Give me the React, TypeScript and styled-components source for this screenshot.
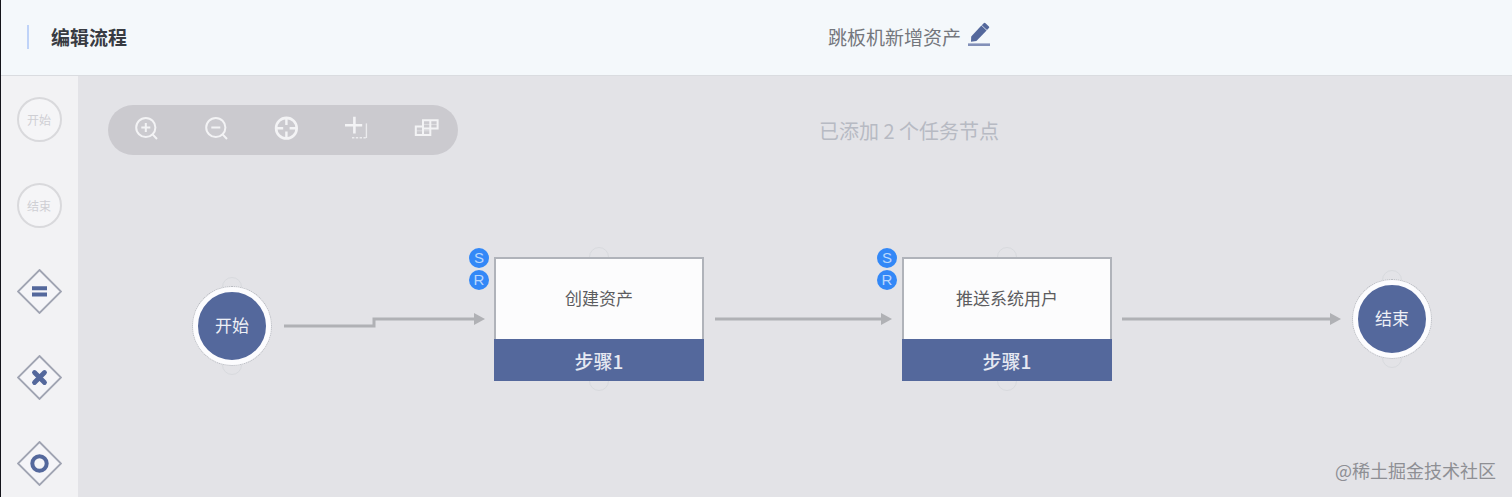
import React from "react";
import styled, { createGlobalStyle } from "styled-components";

const color = {
  navy: "#54689c",
  header: "#f4f8fb",
  side: "#f2f2f4",
  canvas: "#e3e3e7",
  edge: "#b0b1b5",
  badge: "#3388f7",
};

const GlobalStyle = createGlobalStyle`
  *, *::before, *::after { box-sizing: border-box; }
  body {
    margin: 0;
    background: ${color.canvas};
    font-family: "Noto Sans CJK SC", "Noto Sans", sans-serif;
  }
  button {
    margin: 0;
    padding: 0;
    border: 0;
    background: none;
    font: inherit;
    color: inherit;
    cursor: pointer;
  }
  svg { display: block; }
`;

const Page = styled.div`
  display: flex;
  flex-direction: column;
  min-height: 100vh;
  border-left: 1px solid #14141a;
`;

const Header = styled.header`
  display: grid;
  grid-template-columns: 305px 1fr;
  align-items: center;
  height: 76px;
  padding-bottom: 2px;
  background: ${color.header};
  border-bottom: 1px solid #dadce0;
`;

const PageTitle = styled.h1`
  display: flex;
  align-items: center;
  gap: 22px;
  margin: 0;
  padding-left: 26px;
  font-size: 19px;
  line-height: 24px;
  font-weight: 700;
  color: #383b42;

  &::before {
    content: "";
    width: 2px;
    height: 24px;
    background: #bfd3f8;
  }
`;

const FlowName = styled.div`
  display: flex;
  align-items: center;
  justify-content: center;
  gap: 7px;
  font-size: 19px;
  line-height: 24px;
  color: #74777d;
`;

const EditButton = styled.button`
  width: 22px;
  height: 30px;
`;

const Workspace = styled.div`
  display: flex;
  flex: 1;
`;

const Palette = styled.aside`
  display: flex;
  flex-direction: column;
  align-items: center;
  gap: 41px;
  flex: none;
  width: 77px;
  padding: 21px 1px 10px 0;
  background: ${color.side};
`;

const PaletteRound = styled.button`
  width: 45px;
  height: 45px;
  border: 2px solid #d9d9dc;
  border-radius: 50%;
  background: #f5f5f7;
  font-size: 12px;
  color: #cfcfd4;
`;

const PaletteGate = styled.button`
  width: 45px;
  height: 45px;
`;

const Canvas = styled.main`
  position: relative;
  flex: 1;
  min-width: 0;
  overflow: hidden;
  background: ${color.canvas};
`;

const CanvasBar = styled.div`
  display: grid;
  grid-template-columns: 350px 1fr;
  align-items: center;
  padding: 29px 152px 0 30px;
`;

const Toolbar = styled.div`
  display: flex;
  align-items: center;
  gap: 46px;
  height: 50px;
  padding: 0 20px 4px 26px;
  border-radius: 25px;
  background: #cbcacf;
`;

const ToolButton = styled.button`
  flex: none;
  width: 24px;
  height: 24px;
  color: #f3f3f5;
`;

const Hint = styled.p`
  margin: 0;
  padding-top: 2px;
  text-align: center;
  white-space: nowrap;
  font-size: 20px;
  line-height: 24px;
  color: #b7bac3;
`;

const Edges = styled.svg`
  position: absolute;
  left: 0;
  top: 0;
  pointer-events: none;
`;

const NodeBox = styled.div<{ $x: number; $y: number }>`
  position: absolute;
  left: ${(p) => p.$x}px;
  top: ${(p) => p.$y}px;
  isolation: isolate;

  &::before,
  &::after {
    content: "";
    position: absolute;
    z-index: -1;
    left: 50%;
    width: 20px;
    height: 20px;
    margin-left: -10px;
    border: 1px solid #d8dade;
    border-radius: 50%;
  }
  &::before { top: -10px; }
  &::after { bottom: -10px; }
`;

const RoundNode = styled(NodeBox)`
  border: 1px dotted #b4b7bd;
  border-radius: 50%;
`;

const RoundBody = styled.div`
  display: flex;
  align-items: center;
  justify-content: center;
  width: 78px;
  height: 78px;
  padding-bottom: 2px;
  border: 5px solid #fcfcfe;
  border-radius: 50%;
  background: ${color.navy};
  font-size: 17px;
  line-height: 24px;
  color: #eef0f6;
`;

const TaskName = styled.div`
  display: flex;
  align-items: center;
  justify-content: center;
  width: 210px;
  height: 82px;
  padding-bottom: 2px;
  border: 2px solid #b0b3ba;
  border-bottom: 0;
  background: #fcfcfd;
  font-size: 17px;
  line-height: 24px;
  color: #5c5c60;
`;

const TaskStep = styled.div`
  display: flex;
  align-items: center;
  justify-content: center;
  height: 42px;
  padding-top: 2px;
  background: ${color.navy};
  font-size: 19px;
  line-height: 24px;
  font-weight: 500;
  color: #e6e9f2;
`;

const Badges = styled.div`
  position: absolute;
  left: -25px;
  top: -9px;
  display: flex;
  flex-direction: column;
  gap: 2px;
`;

const Badge = styled.span`
  width: 20px;
  height: 20px;
  border-radius: 50%;
  background: ${color.badge};
  text-align: center;
  font-family: "Liberation Sans", sans-serif;
  font-size: 15px;
  line-height: 20px;
  color: #b9d7fd;
`;

const Watermark = styled.span`
  position: absolute;
  right: 16px;
  bottom: 15px;
  font-size: 18px;
  line-height: 24px;
  color: #8e8f94;
`;

const PencilIcon = () => (
  <svg width="22" height="30" viewBox="0 0 22 30" fill={color.navy} aria-hidden="true">
    <path d="M3 19.8 L3.2 14.4 L13.4 3.6 L18.6 8.4 L8.4 19 Z" />
    <path d="M13.8 3.2 L15.7 1.2 Q16.6 0.4 17.5 1.2 L20.9 4.4 Q21.7 5.2 20.9 6 L19 8 Z" />
    <rect x="0" y="21.4" width="22" height="2.6" fill="#8290b8" />
  </svg>
);

const iconProps = {
  width: 24,
  height: 24,
  viewBox: "0 0 24 24",
  fill: "none",
  stroke: "currentColor",
  strokeWidth: 2,
  "aria-hidden": true,
};

const tools = [
  {
    label: "放大",
    icon: (
      <svg {...iconProps}>
        <circle cx="11.8" cy="11.5" r="9.6" />
        <path d="M18.6 18.4 L23 23 M11.8 7 V16 M7.3 11.5 H16.3" />
      </svg>
    ),
  },
  {
    label: "缩小",
    icon: (
      <svg {...iconProps}>
        <circle cx="11.8" cy="11.5" r="9.6" />
        <path d="M18.6 18.4 L23 23 M7.3 11.5 H16.3" />
      </svg>
    ),
  },
  {
    label: "适应画布",
    icon: (
      <svg {...iconProps}>
        <circle cx="12.4" cy="12.2" r="10.3" strokeWidth="2.6" />
        <path d="M12.4 2 V9 M12.4 15.4 V22.4 M2.2 12.2 H9.2 M15.6 12.2 H22.6" strokeWidth="2.4" />
      </svg>
    ),
  },
  {
    label: "框选",
    icon: (
      <svg {...iconProps}>
        <path d="M10.4 0.8 V17.4 M1 9.2 H18.2" strokeWidth="2.6" />
        <path d="M22.4 7.4 V22" strokeWidth="1.4" opacity=".8" />
        <path d="M8 21.8 H22.8" strokeWidth="1.6" strokeDasharray="2.4 1.4" opacity=".8" />
      </svg>
    ),
  },
  {
    label: "排列节点",
    icon: (
      <svg {...iconProps} overflow="visible">
        <path d="M9 4.2 H23.6 V12.6 H9 Z M16.3 4.2 V12.6" />
        <path d="M9 10.6 H1.8 V19 H16.3 V12.6 M9 10.6 V19" />
        <path d="M9 8.4 H23.6 M1.8 14.8 H16.3" strokeWidth="1" opacity=".5" />
      </svg>
    ),
  },
];

const GateIcon = ({ children }: { children: React.ReactNode }) => (
  <svg width="45" height="45" viewBox="0 0 45 45" fill="none" aria-hidden="true">
    <path d="M22.5 1 L44 22.5 L22.5 44 L1 22.5 Z" fill="#f5f5f8" stroke="#a0a4b2" strokeWidth="1.8" />
    <g stroke={color.navy} strokeWidth="4">
      {children}
    </g>
  </svg>
);

const gates = [
  { label: "并行网关", mark: <path d="M15 19.2 H30 M15 25.6 H30" strokeWidth="4" /> },
  { label: "排他网关", mark: <path d="M17.5 17.5 L27.5 27.5 M27.5 17.5 L17.5 27.5" strokeWidth="4.8" strokeLinecap="round" /> },
  { label: "包容网关", mark: <circle cx="22.5" cy="22.5" r="7.2" /> },
];

const tasks = [
  { x: 416, name: "创建资产", step: "步骤1" },
  { x: 824, name: "推送系统用户", step: "步骤1" },
];

export default function App() {
  return (
    <Page>
      <GlobalStyle />
      <Header>
        <PageTitle>编辑流程</PageTitle>
        <FlowName>
          <span>跳板机新增资产</span>
          <EditButton aria-label="编辑名称">
            <PencilIcon />
          </EditButton>
        </FlowName>
      </Header>
      <Workspace>
        <Palette>
          <PaletteRound>开始</PaletteRound>
          <PaletteRound>结束</PaletteRound>
          {gates.map((g) => (
            <PaletteGate key={g.label} aria-label={g.label}>
              <GateIcon>{g.mark}</GateIcon>
            </PaletteGate>
          ))}
        </Palette>
        <Canvas>
          <Edges width="1434" height="421" fill="none" stroke={color.edge} strokeWidth="3" aria-hidden="true">
            <path d="M206 250 H296 V243 H398" />
            <path d="M637 243 H804" />
            <path d="M1044 243 H1254" />
            <g fill={color.edge} stroke="none">
              <path d="M396 237 L407 243 L396 249 Z" />
              <path d="M803 237 L814 243 L803 249 Z" />
              <path d="M1252 237 L1263 243 L1252 249 Z" />
            </g>
          </Edges>
          <CanvasBar>
            <Toolbar role="toolbar">
              {tools.map((t) => (
                <ToolButton key={t.label} aria-label={t.label}>
                  {t.icon}
                </ToolButton>
              ))}
            </Toolbar>
            <Hint>已添加 2 个任务节点</Hint>
          </CanvasBar>
          <RoundNode $x={114} $y={210}>
            <RoundBody>开始</RoundBody>
          </RoundNode>
          {tasks.map((t) => (
            <NodeBox key={t.name} $x={t.x} $y={181}>
              <TaskName>{t.name}</TaskName>
              <TaskStep>{t.step}</TaskStep>
              <Badges>
                <Badge>S</Badge>
                <Badge>R</Badge>
              </Badges>
            </NodeBox>
          ))}
          <RoundNode $x={1274} $y={203}>
            <RoundBody>结束</RoundBody>
          </RoundNode>
          <Watermark>@稀土掘金技术社区</Watermark>
        </Canvas>
      </Workspace>
    </Page>
  );
}
